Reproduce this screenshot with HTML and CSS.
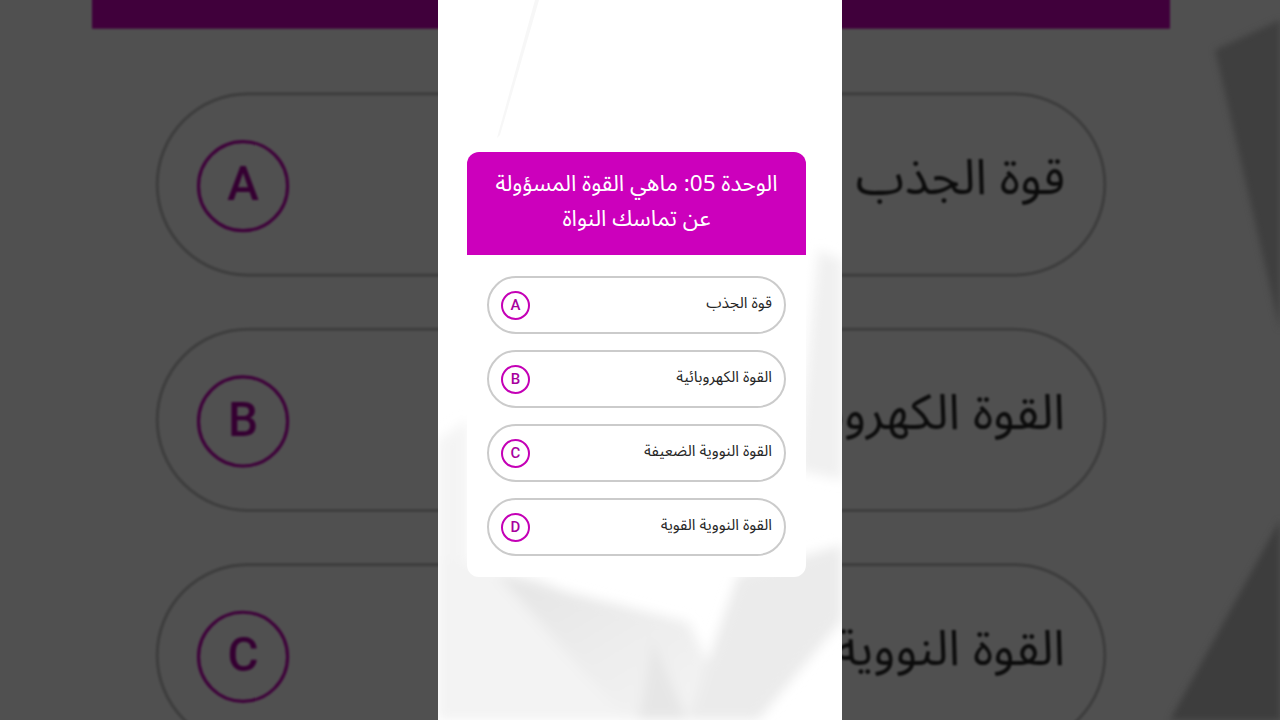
FILE: index.html
```html
<!DOCTYPE html>
<html lang="ar">
<head>
<meta charset="utf-8">
<title>Quiz</title>
<link rel="stylesheet" href="styles.css">
</head>
<body>
<div class="stage">
  <div class="backdrop" aria-hidden="true">
    <svg class="bg-shapes" width="1280" height="720" viewBox="0 0 1280 720">
      <polygon points="1215,50 1280,20 1280,330" fill="#3f3f3f"/>
      <polygon points="1170,720 1280,520 1280,720" fill="#3d3d3d"/>
    </svg>
    <div class="card bg-card">
      <div class="card-head"><p class="title">الوحدة 05: ماهي القوة المسؤولة<br>عن تماسك النواة</p></div>
      <div class="card-body">
        <div class="option"><span class="badge">A</span><span class="opt-text">قوة الجذب</span></div>
        <div class="option"><span class="badge">B</span><span class="opt-text">القوة الكهروبائية</span></div>
        <div class="option"><span class="badge">C</span><span class="opt-text">القوة النووية الضعيفة</span></div>
        <div class="option"><span class="badge">D</span><span class="opt-text">القوة النووية القوية</span></div>
      </div>
    </div>
    <div class="shade"></div>
  </div>

  <main class="column">
    <svg class="col-shapes" width="404" height="720" viewBox="0 0 404 720" aria-hidden="true">
      <defs>
        <filter id="soft" x="-20%" y="-20%" width="140%" height="140%"><feGaussianBlur stdDeviation="6"/></filter>
        <linearGradient id="g1" x1="0" y1="0" x2="1" y2="1">
          <stop offset="0" stop-color="#e4e4e4"/>
          <stop offset="1" stop-color="#f6f6f6"/>
        </linearGradient>
      </defs>
      <g filter="url(#soft)">
        <polygon points="0,555 100,578 220,640 260,720 0,720" fill="#f3f3f3"/>
        <polygon points="60,575 250,622 300,720 190,720" fill="url(#g1)"/>
        <polygon points="300,575 404,545 404,620 320,720 250,720" fill="#ebebeb"/>
        <polygon points="200,720 250,720 215,640" fill="#e6e6e6"/>
        <polygon points="380,250 404,260 404,480 360,470" fill="#f0f0f0"/>
        <polygon points="0,440 30,420 30,560 0,560" fill="#f4f4f4"/>
      </g>
      <polygon points="97,0 101,0 62,135 59,138" fill="#f7f7f7"/>
    </svg>
    <section class="card">
      <header class="card-head">
        <h1 class="title">الوحدة 05: ماهي القوة المسؤولة<br>عن تماسك النواة</h1>
      </header>
      <div class="card-body">
        <div class="option"><span class="badge">A</span><span class="opt-text">قوة الجذب</span></div>
        <div class="option"><span class="badge">B</span><span class="opt-text">القوة الكهروبائية</span></div>
        <div class="option"><span class="badge">C</span><span class="opt-text">القوة النووية الضعيفة</span></div>
        <div class="option"><span class="badge">D</span><span class="opt-text">القوة النووية القوية</span></div>
      </div>
    </section>
  </main>
</div>
</body>
</html>
```

FILE: styles.css
```css
* { box-sizing: border-box; }

html, body {
  margin: 0;
  padding: 0;
  width: 1280px;
  height: 720px;
  overflow: hidden;
  background: #505050;
  font-family: "Noto Sans Arabic", "Noto Sans", "DejaVu Sans", sans-serif;
}

.stage {
  position: relative;
  width: 1280px;
  height: 720px;
  display: flex;
  justify-content: center;
  overflow: hidden;
  background: #ffffff;
}

.backdrop {
  position: absolute;
  inset: 0;
  overflow: hidden;
  background: #ffffff;
}

.bg-shapes {
  position: absolute;
  left: 0;
  top: 0;
  z-index: 2;
  filter: blur(3px);
}

.bg-card {
  position: absolute;
  left: 92px;
  top: -302px;
  transform: scale(3.18);
  transform-origin: 0 0;
  filter: blur(0.3px);
}

.bg-card .card-head { height: 104px; }
.bg-card .card-body { padding-top: 20px; }
.bg-card .option { border-width: 0.9px; border-color: #c4c4c4; }
.bg-card .badge { font-weight: 500; border-width: 1.3px; }

.shade {
  position: absolute;
  inset: 0;
  background: rgba(0, 0, 0, 0.685);
  z-index: 1;
}

.column {
  position: relative;
  z-index: 3;
  width: 404px;
  height: 720px;
  background: #ffffff;
  display: flex;
  flex-direction: column;
  align-items: flex-start;
  padding: 152px 0 0 29px;
}

.col-shapes {
  position: absolute;
  left: 0;
  top: 0;
}

.card {
  position: relative;
  width: 339px;
  border-radius: 12px;
  background: #ffffff;
  overflow: hidden;
}

.card-head {
  background: #cc00bc;
  height: 103px;
  display: flex;
  align-items: center;
  justify-content: center;
  padding: 0 12px 4px;
}

.title {
  margin: 0;
  color: #ffffff;
  font-size: 22.5px;
  font-weight: 400;
  line-height: 35px;
  text-align: center;
  direction: rtl;
}

.card-body {
  display: flex;
  flex-direction: column;
  gap: 16px;
  padding: 21px 20px 21px;
}

.option {
  height: 58px;
  border: 2px solid #cbcbcb;
  border-radius: 29px;
  background: #ffffff;
  display: flex;
  align-items: center;
  justify-content: space-between;
  padding: 0 12px 0 12px;
}

.badge {
  width: 29px;
  height: 29px;
  border: 2px solid #c400b6;
  border-radius: 50%;
  color: #a8009e;
  font-family: Roboto, "Liberation Sans", sans-serif;
  font-weight: 500;
  font-size: 15px;
  display: flex;
  align-items: center;
  justify-content: center;
  flex: none;
}

.opt-text {
  direction: rtl;
  color: #262626;
  font-size: 15.5px;
  line-height: 20px;
  margin-bottom: 4px;
}
```
